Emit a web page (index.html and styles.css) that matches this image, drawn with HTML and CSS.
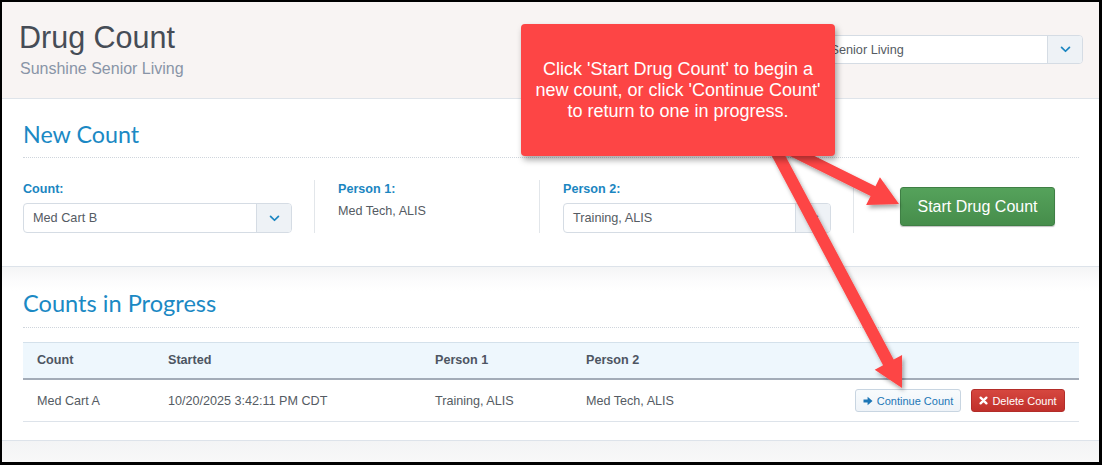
FILE: index.html
```html
<!DOCTYPE html>
<html lang="en">
<head>
<meta charset="utf-8">
<title>Drug Count</title>
<link rel="stylesheet" href="styles.css">
</head>
<body>
<div class="frame">
  <header class="page-head">
    <div class="titles">
      <h1 class="page-title">Drug Count</h1>
      <div class="page-sub">Sunshine Senior Living</div>
    </div>
    <div class="select head-select">
      <span class="select-text">Sunshine Senior Living</span>
      <span class="select-btn">
        <svg class="chev" viewBox="0 0 12 8" width="12" height="8"><path d="M1.5 1.5 L6 6 L10.5 1.5" fill="none" stroke="currentColor" stroke-width="2" stroke-linecap="round" stroke-linejoin="round"/></svg>
      </span>
    </div>
  </header>

  <section class="panel panel-new">
    <h2 class="panel-title">New Count</h2>
    <div class="form-row">
      <div class="field">
        <div class="field-label">Count:</div>
        <div class="select">
          <span class="select-text">Med Cart B</span>
          <span class="select-btn">
            <svg class="chev" viewBox="0 0 12 8" width="12" height="8"><path d="M1.5 1.5 L6 6 L10.5 1.5" fill="none" stroke="currentColor" stroke-width="2" stroke-linecap="round" stroke-linejoin="round"/></svg>
          </span>
        </div>
      </div>
      <div class="field divided">
        <div class="field-label">Person 1:</div>
        <div class="field-value">Med Tech, ALIS</div>
      </div>
      <div class="field divided">
        <div class="field-label">Person 2:</div>
        <div class="select">
          <span class="select-text">Training, ALIS</span>
          <span class="select-btn">
            <svg class="chev" viewBox="0 0 12 8" width="12" height="8"><path d="M1.5 1.5 L6 6 L10.5 1.5" fill="none" stroke="currentColor" stroke-width="2" stroke-linecap="round" stroke-linejoin="round"/></svg>
          </span>
        </div>
      </div>
      <div class="field divided field-action">
        <button class="btn-start" type="button">Start Drug Count</button>
      </div>
    </div>
  </section>

  <section class="panel panel-progress">
    <h2 class="panel-title">Counts in Progress</h2>
    <table class="counts">
      <thead>
        <tr>
          <th class="c-count">Count</th>
          <th class="c-started">Started</th>
          <th class="c-p1">Person 1</th>
          <th class="c-p2">Person 2</th>
          <th class="c-act"></th>
        </tr>
      </thead>
      <tbody>
        <tr>
          <td>Med Cart A</td>
          <td>10/20/2025 3:42:11 PM CDT</td>
          <td>Training, ALIS</td>
          <td>Med Tech, ALIS</td>
          <td class="c-act">
            <div class="row-actions">
              <button class="btn-sm btn-continue" type="button">
                <svg class="ico" viewBox="0 0 10 10" width="10" height="10"><path d="M0.5 3.6 H4.6 V0.8 L9.5 5 L4.6 9.2 V6.4 H0.5 Z" fill="currentColor"/></svg>
                <span>Continue Count</span>
              </button>
              <button class="btn-sm btn-delete" type="button">
                <svg class="ico" viewBox="0 0 10 10" width="9" height="9"><path d="M1.8 1.8 L8.2 8.2 M8.2 1.8 L1.8 8.2" stroke="currentColor" stroke-width="2.6" stroke-linecap="round"/></svg>
                <span>Delete Count</span>
              </button>
            </div>
          </td>
        </tr>
      </tbody>
    </table>
  </section>
  <div class="page-foot"></div>
</div>

<!-- pointer arrows drawn under the callout -->
<svg class="arrows" viewBox="0 0 1102 465" width="1102" height="465">
  <defs>
    <filter id="arrowShadow" x="-20%" y="-20%" width="140%" height="140%">
      <feDropShadow dx="2" dy="3" stdDeviation="2" flood-color="#000" flood-opacity="0.35"/>
    </filter>
  </defs>
  <g filter="url(#arrowShadow)" fill="#fd4545">
    <g transform="translate(899 204) rotate(26.4)">
      <polygon points="-150,-5.5 -29,-5.5 -29,-15.5 0,0 -29,15.5 -29,5.5 -150,5.5"/>
    </g>
    <g transform="translate(902 388) rotate(62)">
      <polygon points="-285,-6 -29,-6 -29,-15.5 0,0 -29,15.5 -29,6 -285,6"/>
    </g>
  </g>
</svg>

<div class="callout">
  <p class="callout-text">Click 'Start Drug Count' to begin a new count, or click 'Continue Count' to return to one in progress.</p>
</div>
</body>
</html>
```

FILE: styles.css
```css
* {
  box-sizing: border-box;
}

html, body {
  margin: 0;
  padding: 0;
  background: #fff;
}

body {
  position: relative;
  width: 1102px;
  height: 465px;
  overflow: hidden;
  font-family: "Liberation Sans", Arial, sans-serif;
  color: #555b63;
}

.frame {
  width: 1102px;
  height: 465px;
  border-style: solid;
  border-color: #000;
  border-width: 2px 3px 3px 2px;
  display: flex;
  flex-direction: column;
  background: #fff;
}

/* ---------- page header ---------- */
.page-head {
  height: 97px;
  flex: none;
  background: #f8f4f3;
  border-bottom: 1px solid #dfe4ea;
  display: flex;
  align-items: center;
  justify-content: space-between;
  padding: 0 16px 0 17px;
}

.titles {
  display: flex;
  flex-direction: column;
  gap: 5px;
  margin-top: -1px;
}

.page-title {
  margin: 0;
  font-weight: normal;
  font-size: 30.5px;
  line-height: 33px;
  color: #464c56;
}

.page-sub {
  font-size: 16px;
  line-height: 20px;
  color: #8994a7;
  padding-left: 1px;
}

/* ---------- select control ---------- */
.select {
  display: flex;
  align-items: stretch;
  height: 30px;
  border: 1px solid #d5dce4;
  border-radius: 4px;
  background: #fff;
  overflow: hidden;
}

.select-text {
  flex: 1;
  display: flex;
  align-items: center;
  padding-left: 9px;
  font-size: 12.7px;
  color: #555b63;
  white-space: nowrap;
}

.select-btn {
  width: 35px;
  flex: none;
  display: flex;
  align-items: center;
  justify-content: center;
  background: #eef2f6;
  border-left: 1px solid #d5dce4;
  color: #1b86c1;
}

.chev {
  display: block;
  width: 11px;
  height: 7px;
}

.head-select {
  width: 319px;
  height: 29px;
  margin-top: -1px;
}

/* ---------- panels ---------- */
.panel {
  flex: none;
  padding: 0 20px 0 21px;
  border-bottom: 1px solid #dde3ea;
}

.panel-title {
  margin: 0;
  font-family: Lato, "Liberation Sans", sans-serif;
  font-weight: normal;
  font-size: 23.3px;
  line-height: 28px;
  color: #1b89c4;
  border-bottom: 1px dotted #cfd5dc;
  padding-bottom: 9px;
}

.panel-new {
  padding-top: 21px;
  padding-bottom: 33px;
}

.panel-progress {
  padding-top: 22px;
  padding-bottom: 18px;
  background: linear-gradient(#f4f5f6 0, #fbfbfc 12px, #fff 24px);
}

.panel-progress .panel-title {
  font-size: 23.6px;
  padding-bottom: 10px;
}

.page-foot {
  flex: 1;
  background: linear-gradient(#f3f4f5, #f8f8f8);
}

/* ---------- new count form ---------- */
.form-row {
  margin-top: 22px;
  display: grid;
  grid-template-columns: 291px 225px 314px 1fr;
  height: 53px;
}

.field {
  padding-right: 22px;
}

.field.divided {
  border-left: 1px solid #e2e6ea;
  padding-left: 23px;
}

.field-label {
  font-size: 12.6px;
  font-weight: bold;
  line-height: 18px;
  color: #1b86c1;
  margin-bottom: 5px;
}

.field-value {
  font-size: 12.6px;
  line-height: 18px;
  color: #555b63;
  margin-top: -1px;
}

.field.field-action {
  display: flex;
  align-items: center;
  padding-left: 46px;
  padding-right: 0;
}

.btn-start {
  width: 155px;
  height: 39px;
  border: 1px solid #3f7f45;
  border-radius: 3px;
  background: linear-gradient(#55a25b, #468d4b);
  box-shadow: 0 1px 1px rgba(0, 0, 0, 0.25);
  color: #fff;
  font-family: "Liberation Sans", Arial, sans-serif;
  font-size: 16px;
  padding: 0;
}

/* ---------- counts table ---------- */
.counts {
  margin-top: 14px;
  width: 100%;
  border-collapse: separate;
  border-spacing: 0;
  font-size: 12.6px;
}

.counts th {
  height: 38px;
  padding: 0 14px 1px;
  text-align: left;
  font-weight: bold;
  color: #4d5562;
  background: #eef7fd;
  border-top: 1px solid #d4e1eb;
  border-bottom: 2px solid #a3acb8;
  vertical-align: middle;
}

.counts td {
  height: 42px;
  padding: 0 14px;
  border-bottom: 1px solid #dde3ea;
  vertical-align: middle;
  color: #555b63;
}

.c-count { width: 131px; }
.c-started { width: 267px; }
.c-p1 { width: 151px; }
.c-p2 { width: 200px; }

.row-actions {
  display: flex;
  justify-content: flex-end;
  gap: 10px;
}

.btn-sm {
  height: 23px;
  display: inline-flex;
  align-items: center;
  justify-content: center;
  gap: 4px;
  border-radius: 3px;
  font-family: "Liberation Sans", Arial, sans-serif;
  font-size: 11px;
  white-space: nowrap;
  padding: 0 4px;
}

.btn-continue {
  width: 106px;
  border: 1px solid #c8d5e1;
  background: linear-gradient(#f8fbfd, #eef3f8);
  color: #1c76b6;
}

.btn-delete {
  width: 94px;
  border: 1px solid #b32d29;
  background: linear-gradient(#d6473f, #c0302b);
  color: #fff;
}

.ico {
  display: block;
  flex: none;
}

/* ---------- overlay: arrows and callout ---------- */
.arrows {
  position: absolute;
  left: 0;
  top: 0;
  pointer-events: none;
}

.callout {
  position: absolute;
  left: 521px;
  top: 24px;
  width: 314px;
  height: 132px;
  background: #fd4545;
  border-radius: 4px;
  box-shadow: 2px 4px 6px rgba(0, 0, 0, 0.35);
  display: flex;
  align-items: center;
  justify-content: center;
  padding: 0 14px;
}

.callout-text {
  margin: 0;
  text-align: center;
  font-size: 18px;
  line-height: 21px;
  color: #fff;
}
```
